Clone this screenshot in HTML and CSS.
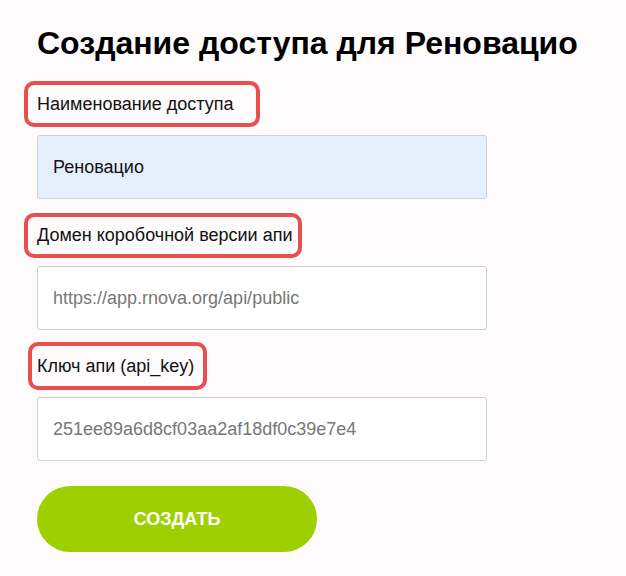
FILE: index.html
```html
<!DOCTYPE html>
<html lang="ru">
<head>
  <meta charset="UTF-8">
  <title>Создание доступа</title>
  <link rel="stylesheet" href="styles.css">
</head>
<body>
  <form class="access-form">
    <h1>Создание доступа для Реновацио</h1>

    <div class="field">
      <label class="field-label mark-1" for="name">Наименование доступа</label>
      <input id="name" class="field-input filled" type="text" value="Реновацио">
    </div>

    <div class="field">
      <label class="field-label mark-2" for="domain">Домен коробочной версии апи</label>
      <input id="domain" class="field-input" type="text" placeholder="https://app.rnova.org/api/public">
    </div>

    <div class="field">
      <label class="field-label mark-3" for="key">Ключ апи (api_key)</label>
      <input id="key" class="field-input" type="text" placeholder="251ee89a6d8cf03aa2af18df0c39e7e4">
    </div>

    <button type="button" class="create-btn">Создать</button>
  </form>
</body>
</html>
```

FILE: styles.css
```css
body { margin: 0; background: #fdfbfc; font-family: "Liberation Sans", Arial, sans-serif; color: #111; }
.access-form { padding: 23px 0 0 37px; }
h1 { margin: 0 0 23px; font-size: 32px; line-height: 40px; font-weight: bold; color: #000; }

.field { margin-bottom: 18px; }
.field-label { position: relative; display: inline-block; font-size: 18px; line-height: 36px; margin-bottom: 13px; }
.field-label::before {
  content: ""; position: absolute; border: 4px solid #e84f4f; border-radius: 10px;
}
.mark-1::before { left: -13px; right: -26px; top: -5px; bottom: -5px; }
.mark-2::before { left: -13px; right: -10px; top: -4px; bottom: -5px; }
.mark-3::before { left: -9px; right: -13px; top: -6px; bottom: -6px; }

.field-input {
  display: block; box-sizing: border-box; width: 450px; height: 64px; padding: 0 15px;
  border: 1px solid #cfcfd4; border-radius: 3px; background: #fff;
  font-family: inherit; font-size: 18px; color: #111; outline: none;
}
.field-input::placeholder { color: #777; }
.field-input.filled { background: #e6f0fd; }

.create-btn {
  display: block; margin-top: 25px; width: 280px; height: 66px; border: none; border-radius: 33px;
  background: #9ecf00; color: #fff; font-family: inherit; font-size: 18px; font-weight: bold;
  text-transform: uppercase; cursor: pointer;
}
```
